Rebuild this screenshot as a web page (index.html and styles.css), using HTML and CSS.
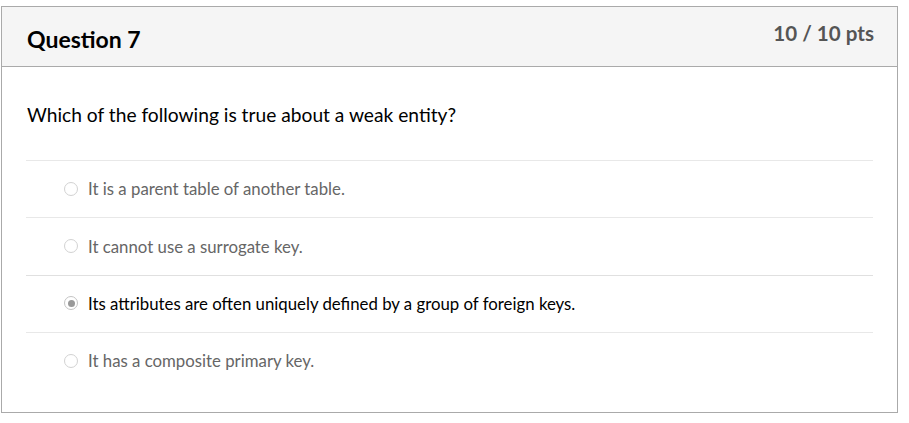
FILE: index.html
```html
<!DOCTYPE html>
<html>
<head>
<meta charset="utf-8">
<link rel="stylesheet" href="styles.css">
</head>
<body>
<div class="question">
  <div class="header">
    <h2 class="title">Question 7</h2>
    <div class="pts">10 / 10 pts</div>
  </div>
  <div class="content">
    <p class="text">Which of the following is true about a weak entity?</p>
    <div class="answers">
      <div class="answer"><span class="radio"></span><span class="label">It is a parent table of another table.</span></div>
      <div class="answer"><span class="radio"></span><span class="label">It cannot use a surrogate key.</span></div>
      <div class="answer selected"><span class="radio"></span><span class="label">Its attributes are often uniquely defined by a group of foreign keys.</span></div>
      <div class="answer"><span class="radio"></span><span class="label">It has a composite primary key.</span></div>
    </div>
  </div>
</div>
</body>
</html>
```
FILE: styles.css
```css
html, body { margin: 0; padding: 0; background: #fff; }
body { font-family: Lato, "Noto Sans", sans-serif; color: #000; }
.question {
  margin: 6px 0 0 1px;
  width: 895px;
  border: 1px solid #aaaaaa;
}
.header {
  display: flex;
  justify-content: space-between;
  align-items: flex-start;
  background: #f5f5f5;
  border-bottom: 1px solid #aaaaaa;
  height: 59px;
  padding: 0 23px 0 25px;
}
.title {
  margin: 0;
  padding-top: 18px;
  font-size: 23px;
  font-weight: 700;
  line-height: 28px;
  color: #000;
}
.pts {
  padding-top: 13px;
  font-size: 20.6px;
  font-weight: 700;
  line-height: 26px;
  color: #555;
}
.content { padding: 0 24px 0 24px; }
.text {
  margin: 0;
  padding: 35px 0 32px 1px;
  font-size: 19.2px;
  line-height: 26px;
}
.answers { padding-bottom: 22px; }
.answer {
  display: flex;
  align-items: center;
  box-sizing: border-box;
  height: 57.4px;
  border-top: 1px solid #e8e8e8;
  padding-left: 38px;
  padding-bottom: 1px;
  font-size: 16.8px;
  color: #666;
}
.radio {
  width: 12px;
  height: 12px;
  border: 1.5px solid #d2d2d2;
  border-radius: 50%;
  box-sizing: content-box;
  margin-right: 10px;
  background: #fff;
  position: relative;
}
.selected { color: #000; }
.selected .radio {
  border-color: #c4c4c4;
}
.selected .radio::after {
  content: "";
  position: absolute;
  left: 2.5px; top: 2.5px;
  width: 7px; height: 7px;
  border-radius: 50%;
  background: #999;
}
.answer:first-child + .answer + .answer { border-top-color: #e0e0e0; }
```
